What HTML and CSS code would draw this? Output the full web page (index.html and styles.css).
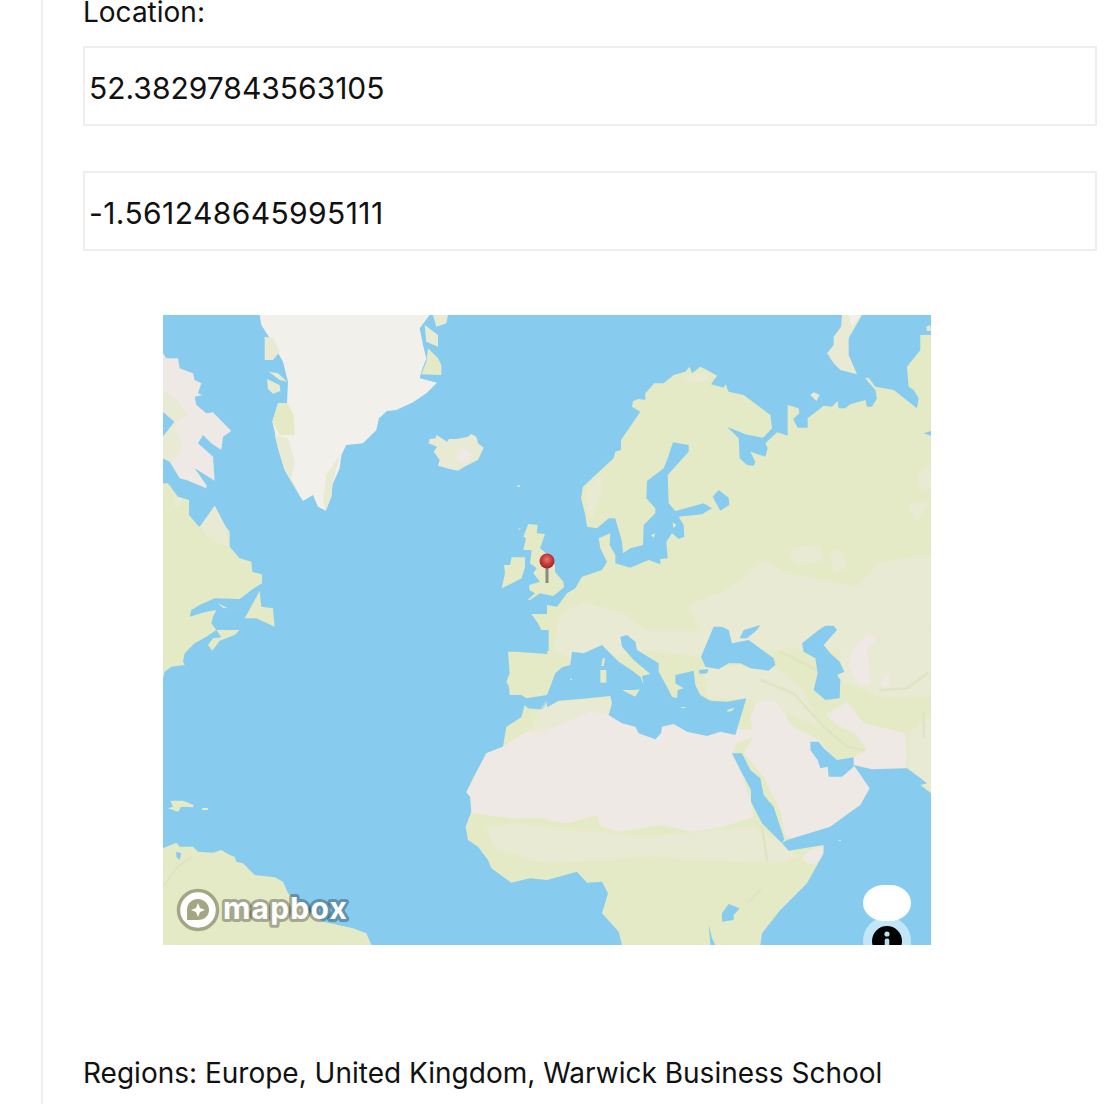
FILE: index.html

```html
<!DOCTYPE html>
<html lang="en">
<head>
    <meta charset="UTF-8">
    <meta name="viewport" content="width=device-width, initial-scale=1.0">
    <title>Location</title>
    <link rel="stylesheet" href="styles.css">
</head>
<body>
    <div class="panel">
        <label class="field-label" for="lat">Location:</label>
        <input class="coord" type="text" id="lat" value="52.38297843563105">
        <input class="coord coord-lng" type="text" id="lng" value="-1.561248645995111">

        <div class="map">
            <svg class="map-art" viewBox="0 0 2304 1890" aria-hidden="true">
                <rect class="sea" width="2304" height="1890"/>

                <!-- north west: greenland, canada, iceland, uk -->
                <g>
                    <polygon class="ice" points="290,0 800,0 770,40 780,90 790,130 775,170 770,190 822,203 790,235 750,262 700,285 672,288 648,310 640,345 600,385 550,390 535,420 530,460 508,510 505,545 488,587 465,575 450,540 420,558 400,525 365,465 345,400 335,350 328,320 345,265 372,265 375,200 360,140 320,70 295,30"/>
                    <polygon class="light" points="305,65 330,70 350,110 330,135 305,135"/>
                    <polygon class="land" points="345,265 375,265 392,300 395,360 350,360 328,320"/>
                    <polygon class="light" points="335,360 375,370 395,440 385,490 420,558 400,525 365,465 345,400"/>
                    <polygon class="light" points="530,420 508,510 505,545 488,587 480,560 490,480"/>
                    <polygon class="light" points="810,0 855,0 850,25 820,35"/>
                    <polygon class="light" points="785,30 825,60 825,95 790,80"/>
                    <polygon class="land" points="795,100 825,130 835,150 835,180 775,178 790,140"/>
                    <polygon class="light" points="312,192 350,210 352,228 330,236 315,222"/>
                    <polygon class="light" points="318,170 345,175 372,200 350,195"/>

                    <polygon class="desert" points="0,115 10,130 45,130 50,160 90,175 95,195 115,205 105,235 118,240 95,245 100,270 130,295 150,292 205,348 180,365 175,405 145,385 120,360 105,385 150,425 155,497 95,460 130,510 130,520 70,495 50,490 20,440 0,430 0,365 35,320 0,290"/>
                    <polygon class="light" points="0,225 40,255 75,300 40,320 35,345 60,385 50,410 25,440 0,430 0,365 35,320 0,290"/>

                    <polygon class="land" points="0,505 15,505 45,545 78,555 78,600 108,635 135,620 155,572 185,630 200,650 200,695 230,730 265,740 268,770 297,778 297,805 265,825 230,852 155,850 110,870 85,885 80,905 130,890 160,885 150,905 145,925 160,945 0,945"/>
                    <polygon class="light" points="30,545 55,548 55,575 35,575"/>
                    <polygon class="light" points="110,635 155,572 185,630 200,695 150,680"/>
                    <polygon class="land" points="165,865 195,880 180,878"/>
                    <polygon class="land" points="245,910 290,828 295,875 330,880 335,935 280,910"/>

                    <polygon class="light" points="800,372 818,370 820,360 840,372 852,380 858,372 880,372 915,365 925,357 940,365 945,385 962,398 945,435 910,452 885,467 860,462 825,452 830,435 812,410 822,395 797,385"/>
                    <polygon class="desert" points="880,415 900,400 925,415 920,435 895,445 880,432"/>
                    <polygon class="light" points="1062,512 1071,510 1071,515 1063,516"/>

                    <polygon class="land" points="1105,897 1152,897 1152,945 1135,945 1125,925"/>

                    <g transform="translate(981,585)">
                        <polygon class="land" points="115,42 143,45 140,70 165,72 150,115 168,130 195,165 195,185 220,215 222,232 190,258 150,250 120,270 113,270 135,250 118,240 118,225 150,215 130,190 140,175 120,160 125,120 100,120 108,85 100,80"/>
                        <polygon class="land" points="65,142 105,142 105,170 95,205 35,235 45,190 42,165 60,165"/>
                        <polygon class="land" points="85,55 92,55 88,60"/>
                    </g>
                </g>

                <!-- north east: scandinavia, russia -->
                <g transform="translate(1152,0)">
                    <polygon class="land" points="0,870 30,875 60,835 85,820 105,785 165,765 180,740 160,700 155,670 190,655 188,690 205,720 205,745 250,758 305,735 340,748 340,732 362,730 358,680 375,655 395,672 412,665 410,630 395,605 465,598 495,580 470,565 385,588 365,565 362,480 425,410 425,390 378,382 362,430 350,460 300,498 298,550 325,580 325,595 290,630 288,690 250,700 228,715 225,680 205,610 185,610 150,640 120,635 115,600 102,550 108,515 165,462 200,430 205,410 222,405 222,375 280,290 255,275 258,258 275,252 295,255 295,235 322,205 350,205 380,180 415,170 428,155 435,175 460,155 480,165 510,182 492,208 530,218 535,208 545,230 590,240 670,300 675,340 648,368 595,358 540,335 575,370 578,430 600,450 620,452 625,440 610,410 655,425 662,400 655,385 690,352 722,362 722,270 755,280 757,295 738,312 752,338 782,338 782,310 830,272 855,275 872,258 875,280 895,280 910,268 955,255 960,275 975,275 990,250 985,225 955,190 965,188 985,215 1040,225 1110,280 1115,250 1100,225 1085,215 1080,155 1120,105 1120,60 1152,60 1152,945 0,945"/>
                    <polygon class="light soft" points="400,190 430,180 470,175 490,195 440,205"/>
                    <polygon class="light soft" points="125,515 165,480 160,540 140,590 130,615 115,550"/>
                    <polygon class="light soft" points="730,700 820,690 830,740 740,745"/>
                    <polygon class="light soft" points="850,710 880,700 900,760 860,770"/>
                    <polygon class="light soft" points="1110,470 1152,450 1152,520 1120,530"/>
                    <polygon class="light soft" points="1080,570 1150,555 1110,620"/>
                    <polygon class="sea" points="497,545 515,525 545,548 547,570 520,587 505,560"/>
                    <polygon class="sea" points="1130,355 1152,348 1152,362"/>
                    <polygon class="land" points="378,622 388,630 378,640"/>
                    <polygon class="land" points="312,660 325,655 320,668"/>
                    <polygon class="light" points="885,0 945,0 905,70 905,120 930,178 880,165 860,145 840,115 860,90 860,65 882,35"/>
                    <polygon class="ice" points="905,0 940,0 915,35"/>
                    <polygon class="light" points="790,240 800,232 818,240 808,258"/>
                    <polygon class="land" points="1138,35 1150,30 1152,48 1140,48"/>
                </g>

                <!-- south west: atlantic, caribbean, west africa -->
                <g transform="translate(0,945)">
                    <polygon class="land" points="0,0 160,0 130,20 95,40 65,70 60,95 65,105 25,110 5,125 0,145"/>
                    <polygon class="land" points="135,45 150,25 175,22 160,0 230,0 215,15 170,32 148,62"/>
                    <polygon class="land" points="22,512 60,512 92,525 90,532 55,530 45,545 15,535 30,530"/>
                    <polygon class="land" points="117,534 135,534 135,540 117,540"/>
                    <polygon class="land" points="0,655 40,638 50,650 90,650 105,665 150,668 175,660 200,675 215,680 220,695 240,700 275,735 335,742 360,755 375,790 385,800 420,830 480,875 570,895 610,910 625,945 0,945"/>
                    <polygon class="sea" points="40,665 55,670 50,690 40,680"/>
                    <polyline class="ridge" points="0,770 40,715 85,680"/>
                    <polygon class="land" points="1035,65 1060,65 1152,72 1152,195 1090,205 1075,195 1040,195 1038,170 1030,155 1040,130"/>
                    <polygon class="land" points="1085,225 1095,235 1152,240 1152,750 1100,745 1045,758 985,715 975,690 945,650 915,630 908,590 925,545 922,500 910,487 930,445 970,370 1020,350 1030,290 1075,262"/>
                    <polygon class="desert" points="1152,295 1090,305 1020,350 970,370 910,487 922,500 925,548 1040,565 1152,565"/>
                </g>

                <!-- south east: mediterranean, middle east, east africa -->
                <g transform="translate(1152,945)">
                    <rect class="land" width="1152" height="945"/>
                    <polygon class="light soft" points="420,-75 520,-110 590,-155 640,-210 670,-200 705,-175 800,-155 930,-130 1000,-205 1152,-225 1152,60 500,60"/>
                    <polygon class="light soft" points="40,-50 110,-85 240,-45 300,0 500,0 460,80 300,60 100,100 20,60"/>
                    <polygon class="light soft" points="880,0 1152,0 1152,200 1000,200 880,150"/>
                    <polygon class="light soft" points="470,110 680,110 760,170 820,290 700,240 600,210 480,200"/>
                    <polygon class="light soft" points="-190,590 -100,580 0,590 300,620 620,590 760,680 700,700 300,680 0,700 -150,660"/>
                    <polygon class="light soft" points="0,215 190,205 190,250 0,310 -40,315 -40,270"/>
                    <polygon class="light soft" points="1085,310 1152,250 1152,480 1085,415"/>
                    <polygon class="desert" points="0,300 130,245 190,255 225,280 265,290 345,285 380,282 620,300 620,320 570,340 555,370 580,420 612,515 620,560 530,590 440,605 340,585 220,605 160,590 150,555 60,580 0,570"/>
                    <polygon class="desert" points="620,320 610,260 630,215 680,212 715,250 730,285 815,330 840,360 870,390 920,382 968,475 940,525 850,590 740,625 715,620 700,540 650,440 590,370"/>
                    <polygon class="desert" points="835,255 900,215 950,280 1075,310 1080,380 1075,415 975,418 925,405 920,382 960,360 925,310 880,290"/>
                    <polygon class="desert" points="765,680 790,660 830,650 825,680 800,705 775,695"/>
                    <polygon class="desert" points="905,85 925,45 965,10 995,30 960,55 970,160 935,165 905,110"/>
                    <polygon class="desert" points="1000,150 1030,130 1025,170 1005,170"/>
                    <polyline class="ridge" points="640,150 740,190 830,290 900,350 950,360"/>
                    <polyline class="ridge" points="700,65 760,95 810,120"/>
                    <polyline class="ridge" points="1000,180 1080,175 1140,130"/>
                    <polyline class="ridge" points="1130,250 1130,320"/>
                    <polyline class="ridge" points="645,590 660,690"/>
                    <polyline class="ridge" points="600,820 640,780"/>
                    <polygon class="sea" points="0,0 5,0 5,62 0,65"/>
                    <polygon class="sea" points="0,232 0,195 25,130 45,112 70,105 75,65 110,70 165,45 215,95 250,118 280,140 290,165 285,138 310,132 260,90 225,50 220,20 240,15 265,35 270,60 335,100 335,125 360,170 375,200 390,205 392,180 410,175 385,160 385,135 440,122 445,165 460,195 490,212 540,215 598,205 565,315 520,305 480,318 420,305 380,282 345,290 342,310 325,328 275,310 265,290 225,280 185,255 195,220 190,198 100,207 35,212"/>
                    <polygon class="land" points="225,180 262,180 278,178 265,200"/>
                    <polygon class="land" points="160,120 178,120 178,158 160,158"/>
                    <polygon class="land" points="167,85 174,85 170,108 163,108"/>
                    <polygon class="land" points="70,146 75,146 75,150 70,150"/>
                    <polygon class="land" points="402,231 415,231 415,234 402,234"/>
                    <polygon class="land" points="540,240 562,233 555,243 542,245"/>
                    <polygon class="sea" points="500,-10 525,-10 545,0 555,40 605,30 680,85 685,105 665,122 610,115 580,100 545,100 515,118 475,110 462,80"/>
                    <polygon class="sea" points="590,0 640,-15 630,0 600,25 578,25"/>
                    <polygon class="sea" points="456,120 485,117 480,130 458,132"/>
                    <polygon class="sea" points="815,0 835,-13 860,-13 870,0 830,45 850,70 878,95 892,125 870,135 880,150 878,205 835,210 800,180 812,130 805,85 770,65 765,40"/>
                    <polygon class="sea" points="790,335 815,335 830,355 870,390 920,382 920,410 885,440 845,440 842,410 820,415 812,390 790,360"/>
                    <polygon class="sea" points="555,370 585,370 610,420 640,445 650,495 680,530 712,628 705,640 645,580 612,515 612,480 580,420"/>
                    <polygon class="sea" points="920,405 968,475 940,525 905,550 850,590 720,630 705,640 725,662 830,645 830,670 780,760 700,840 645,910 640,945 1152,945 1152,490 1120,465 1140,460 1115,440 1080,415 975,418"/>
                    <polygon class="sea" points="0,750 90,725 120,758 165,755 183,790 165,850 215,905 225,945 0,945"/>
                    <polygon class="sea" points="525,850 545,822 578,835 560,855 560,870 525,875"/>
                    <polygon class="sea" points="485,882 495,925 505,945 490,945"/>
                    <polygon class="land" points="875,630 882,630 882,633 875,633"/>
                </g>
            </svg>

            <svg class="pin" viewBox="0 0 18 32" aria-hidden="true">
                <defs>
                    <radialGradient id="pinHead" cx="50%" cy="40%" r="60%">
                        <stop offset="0" stop-color="#e07a70"/>
                        <stop offset="0.55" stop-color="#c8393a"/>
                        <stop offset="1" stop-color="#98262a"/>
                    </radialGradient>
                </defs>
                <rect class="pin-stem" x="7.5" y="12" width="3" height="19"/>
                <circle cx="9" cy="9" r="7.5" fill="url(#pinHead)"/>
            </svg>

            <div class="mapbox-logo">
                <svg class="mapbox-mark" viewBox="0 0 44 44" aria-hidden="true">
                    <circle class="mark-ring" cx="22" cy="22" r="19.5"/>
                    <path class="mark-drop" d="M11 32 V22 C11 15 16 11 22 11 C28 11 33 16 33 22 C33 28 28 32 22 32 Z"/>
                    <path class="mark-star" d="M22 15 L24 20 L29 22 L24 24 L22 29 L20 24 L15 22 L20 20 Z"/>
                </svg>
                <svg class="mapbox-word" viewBox="0 0 132 44">
                    <text class="word" x="3" y="31">mapbox</text>
                </svg>
            </div>

            <div class="attrib-ghost">
                <svg class="attrib-icon" viewBox="0 0 30 30" aria-hidden="true">
                    <circle cx="15" cy="15" r="15"/>
                    <circle class="attrib-i" cx="15" cy="8" r="2.6"/>
                    <rect class="attrib-i" x="12.7" y="12.5" width="4.6" height="11" rx="2"/>
                </svg>
            </div>
            <div class="attrib-blob"></div>
        </div>

        <p class="regions">Regions: Europe, United Kingdom, Warwick Business School</p>
    </div>
</body>
</html>
```

FILE: styles.css

```css
html, body {
    margin: 0;
    height: 100%;
    overflow: hidden;
    background-color: #fff;
}
body {
    font-family: Inter, "Liberation Sans", sans-serif;
    font-size: 28px;
    color: #111;
}
.panel {
    margin-left: 41px;
    min-height: 100%;
    padding-left: 40px;
    border-left: 2px solid #eee;
}
.field-label {
    display: block;
    height: 46px;
    line-height: 24px;
}
.coord {
    display: block;
    box-sizing: border-box;
    width: 1014px;
    height: 80px;
    margin-bottom: 45px;
    padding: 3px 4px 0;
    border: 2px solid #eee;
    border-radius: 0;
    font: inherit;
    font-size: 30px;
    color: #111;
    background-color: #fff;
}
.coord-lng {
    letter-spacing: 0.4px;
}
.map {
    position: relative;
    width: 768px;
    height: 630px;
    margin: 64px 0 0 80px;
    overflow: hidden;
}
.map-art {
    display: block;
    width: 768px;
    height: 630px;
}
.sea { fill: #87ccee; }
.land { fill: #e5eac6; }
.light { fill: #e9ead3; }
.desert { fill: #eee9e4; }
.ice { fill: #f2f0eb; }
.soft { filter: blur(4px); }
.ridge {
    fill: none;
    stroke: #e1e4c4;
    stroke-width: 8;
    stroke-linecap: round;
    stroke-linejoin: round;
    filter: blur(2px);
}
.pin {
    position: absolute;
    left: 375px;
    top: 237px;
    width: 18px;
    height: 32px;
}
.pin-stem { fill: #8d8a80; }
.mapbox-logo {
    position: absolute;
    left: 13px;
    bottom: 13px;
    display: flex;
    align-items: center;
}
.mapbox-mark {
    display: block;
    width: 44px;
    height: 44px;
}
.mark-ring {
    fill: #fff;
    stroke: #a3a583;
    stroke-width: 3.5;
}
.mark-drop { fill: #a3a583; }
.mark-star { fill: #fff; }
.mapbox-word {
    display: block;
    width: 132px;
    height: 44px;
}
.word {
    font-family: Inter, "Open Sans", sans-serif;
    font-size: 30px;
    font-weight: 700;
    letter-spacing: 1.2px;
    fill: #fff;
    stroke: rgba(0, 0, 0, 0.3);
    stroke-width: 6px;
    stroke-linejoin: round;
    paint-order: stroke;
}
.attrib-ghost {
    position: absolute;
    right: 20px;
    top: 602px;
    display: flex;
    justify-content: center;
    align-items: center;
    width: 48px;
    height: 48px;
    border-radius: 50%;
    background-color: rgba(255, 255, 255, 0.5);
}
.attrib-icon {
    display: block;
    width: 30px;
    height: 30px;
    fill: #000;
}
.attrib-i { fill: #b9e1f4; }
.attrib-blob {
    position: absolute;
    right: 20px;
    top: 570px;
    width: 48px;
    height: 36px;
    border-radius: 21px / 18px;
    background-color: #fff;
}
.regions {
    margin: 114px 0 0;
    line-height: 28px;
}
```
